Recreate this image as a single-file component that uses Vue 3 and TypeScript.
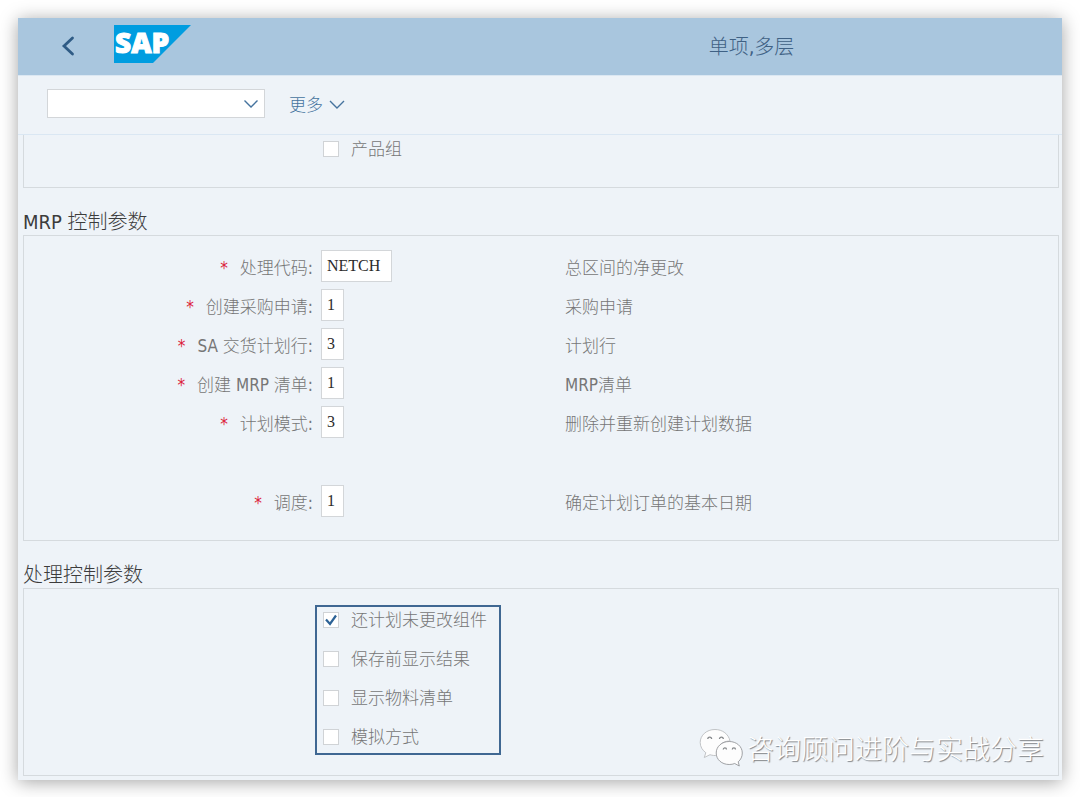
<script setup lang="ts">
import { ref } from 'vue'

interface Param {
  id: string
  label: string
  value: string
  text: string
  wide?: boolean
  spaced?: boolean
}

interface Option {
  id: string
  label: string
  checked: boolean
}

const command = ref('')
const productGroup = ref(false)

const params = ref<Param[]>([
  { id: 'proc', label: '处理代码:', value: 'NETCH', text: '总区间的净更改', wide: true },
  { id: 'preq', label: '创建采购申请:', value: '1', text: '采购申请' },
  { id: 'sched', label: 'SA 交货计划行:', value: '3', text: '计划行' },
  { id: 'list', label: '创建 MRP 清单:', value: '1', text: 'MRP清单' },
  { id: 'mode', label: '计划模式:', value: '3', text: '删除并重新创建计划数据' },
  { id: 'dates', label: '调度:', value: '1', text: '确定计划订单的基本日期', spaced: true },
])

const options = ref<Option[]>([
  { id: 'unchanged', label: '还计划未更改组件', checked: true },
  { id: 'results', label: '保存前显示结果', checked: false },
  { id: 'bom', label: '显示物料清单', checked: false },
  { id: 'simulate', label: '模拟方式', checked: false },
])
</script>

<template>
  <div class="window">
    <header class="shell">
      <button class="back" type="button" aria-label="返回">
        <svg width="14" height="20" viewBox="0 0 14 20">
          <path d="M11.500 2 L3 10 L11.500 18" fill="none" stroke="#2f5b85" stroke-width="2.8" stroke-linecap="round" />
        </svg>
      </button>
      <svg class="logo" width="77" height="38" viewBox="0 0 77 38">
        <polygon points="0,0 77,0 39,38 0,38" fill="#009de0" />
        <text x="1" y="28" class="logo-text">SAP</text>
      </svg>
      <h1 class="title">单项,多层</h1>
    </header>

    <nav class="toolbar">
      <div class="combo">
        <select v-model="command" aria-label="命令">
          <option value=""></option>
        </select>
        <svg class="combo-arrow" width="16" height="10" viewBox="0 0 16 10">
          <path d="M1.500 1.500 L8 8 L14.500 1.500" fill="none" stroke="#45739e" stroke-width="1.4" />
        </svg>
      </div>
      <button class="more" type="button">
        更多
        <svg width="16" height="10" viewBox="0 0 16 10">
          <path d="M1 1 L8 8 L15 1" fill="none" stroke="#45739e" stroke-width="1.4" />
        </svg>
      </button>
    </nav>

    <main class="content">
      <section class="group group-scope">
        <div class="option">
          <span class="tick">
            <input id="product-group" v-model="productGroup" type="checkbox" />
            <svg v-if="productGroup" width="16" height="16" viewBox="0 0 16 16">
              <path d="M3 7.500 L7 12 L13 3.500" fill="none" stroke="#2c6296" stroke-width="2.2" />
            </svg>
          </span>
          <label for="product-group">产品组</label>
        </div>
      </section>

      <h2 class="heading">MRP 控制参数</h2>
      <section class="group group-params">
        <div v-for="p in params" :key="p.id" class="row" :class="{ spaced: p.spaced }">
          <label :for="p.id"><span class="star">*</span>{{ p.label }}</label>
          <div class="field">
            <input :id="p.id" v-model="p.value" type="text" :class="{ wide: p.wide }" />
          </div>
          <span class="text">{{ p.text }}</span>
        </div>
      </section>

      <h2 class="heading">处理控制参数</h2>
      <section class="group group-options">
        <div class="marked">
          <div v-for="o in options" :key="o.id" class="option">
            <span class="tick">
              <input :id="o.id" v-model="o.checked" type="checkbox" />
              <svg v-if="o.checked" width="16" height="16" viewBox="0 0 16 16">
                <path d="M3 7.500 L7 12 L13 3.500" fill="none" stroke="#2c6296" stroke-width="2.2" />
              </svg>
            </span>
            <label :for="o.id">{{ o.label }}</label>
          </div>
        </div>
      </section>
    </main>

    <div class="watermark">
      <svg width="44" height="40" viewBox="0 0 44 40">
        <g fill="#fdfdfd" stroke="#b4b6b9" stroke-width="0.8">
          <path d="M16 1.500C7.500 1.500 1.200 7.300 1.200 14.500C1.200 18.800 3.500 22.300 6.800 24.700L5.300 29.500L11 26.700C13.500 27.500 15.500 27.700 18.500 27.400C16.500 19 23 12.800 31 13C29.500 6 23.500 1.500 16 1.500Z" />
          <path stroke="#8a8c8f" d="M30.200 13.500C22.800 13.500 17.200 18.500 17.200 25C17.200 31.600 22.800 36.500 30.200 36.500C32.300 36.500 34 36.200 35.700 35.500L40.300 38L39.200 33.800C41.800 31.700 43.300 28.500 43.300 25C43.300 18.500 37.500 13.500 30.200 13.500Z" />
        </g>
        <g fill="none" stroke="#85888b" stroke-width="1.300">
          <path d="M8.800 11a1.900 1.900 0 0 1 3.800 0" />
          <path d="M20.500 11a1.900 1.900 0 0 1 3.800 0" />
          <path d="M24.300 21.500a1.600 1.600 0 0 1 3.200 0" />
          <path d="M33.300 21.500a1.600 1.600 0 0 1 3.200 0" />
        </g>
      </svg>
      <span>咨询顾问进阶与实战分享</span>
    </div>
  </div>
</template>

<style>
body {
  margin: 0;
  background: #fff;
}
</style>

<style scoped>
* {
  box-sizing: border-box;
}

.window {
  position: relative;
  margin: 18px;
  background: #eef3f8;
  box-shadow: 0 2px 17px rgba(0, 0, 0, 0.36);
  font-family: 'DejaVu Sans Condensed', 'DejaVu Sans', 'Noto Sans CJK SC', sans-serif;
  font-weight: 300;
  font-size: 17px;
  line-height: 24px;
  color: #767676;
}

.shell {
  display: flex;
  align-items: center;
  height: 57px;
  padding: 0 0 2px 39px;
  background: #a9c6de;
}

.back {
  display: flex;
  align-items: center;
  justify-content: center;
  width: 22px;
  height: 28px;
  padding: 0;
  border: 0;
  background: none;
}

.logo {
  flex: none;
  margin-left: 35px;
  margin-bottom: 4px;
  overflow: visible;
}

.logo-text {
  font-family: 'Open Sans', 'Liberation Sans', sans-serif;
  font-size: 28px;
  font-weight: 800;
  fill: #fff;
  stroke: #fff;
  stroke-width: 1px;
}

.title {
  flex: 1;
  margin: 0 0 0 250px;
  padding-top: 2px;
  font-size: 20px;
  font-weight: 300;
  line-height: 28px;
  text-align: center;
  color: #3f6184;
}

.toolbar {
  display: flex;
  align-items: center;
  gap: 24px;
  height: 60px;
  padding: 0 29px 4px;
  border-top: 1px solid #dbe7f2;
  border-bottom: 1px solid #dae7f3;
}

.combo {
  position: relative;
  width: 218px;
}

.combo select {
  display: block;
  width: 100%;
  height: 29px;
  border: 1px solid #d3d6d9;
  border-radius: 0;
  appearance: none;
  background: #fff;
}

.combo-arrow {
  position: absolute;
  top: 10px;
  right: 6px;
  pointer-events: none;
}

.more {
  display: flex;
  align-items: center;
  gap: 6px;
  padding: 3px 0 0;
  border: 0;
  background: none;
  font: inherit;
  color: #45739e;
}

.content {
  padding: 0 3px 4px 5px;
}

.group {
  border: 1px solid #d5dade;
}

.heading {
  margin: 22px 0 0;
  font-size: 20px;
  font-weight: 300;
  line-height: 25px;
  color: #3c3c3c;
}

.group-scope {
  height: 53px;
  padding: 2px 0 0 299px;
  border-top: 0;
}

.group-params {
  display: flex;
  flex-direction: column;
  gap: 7px;
  padding: 14px 0 23px;
}

.row {
  display: grid;
  grid-template-columns: 289px 236px 1fr;
  column-gap: 8px;
  align-items: center;
}

.row.spaced {
  margin-top: 40px;
}

.row label,
.row .text {
  padding-top: 3px;
}

.row label {
  text-align: right;
}

.star {
  margin-right: 12px;
  font-weight: 400;
  color: #dc1e3c;
}

.field input {
  display: block;
  width: 23px;
  height: 32px;
  padding: 0 5px;
  border: 1px solid #d3d6d9;
  border-radius: 0;
  background: #fff;
  font-family: 'Liberation Serif', serif;
  font-size: 16px;
  color: #2b2b2b;
}

.field input.wide {
  width: 71px;
}

.group-options {
  padding: 16px 0 20px 291px;
}

.marked {
  display: flex;
  flex-direction: column;
  gap: 15px;
  width: 186px;
  padding: 1px 0 4px 6px;
  border: 2px solid #3f6792;
}

.option {
  display: flex;
  align-items: center;
  gap: 12px;
}

.tick {
  position: relative;
  width: 16px;
  height: 16px;
}

.tick input {
  display: block;
  width: 16px;
  height: 16px;
  margin: 0;
  border: 1px solid #d0d3d6;
  appearance: none;
  background: #fff;
}

.tick svg {
  position: absolute;
  top: 0;
  left: 0;
  pointer-events: none;
}

.watermark {
  position: absolute;
  right: 18px;
  bottom: 12px;
  display: flex;
  align-items: center;
  gap: 4px;
  font-family: 'Noto Sans CJK SC', sans-serif;
  font-size: 27px;
  line-height: 40px;
  color: #fff;
  text-shadow: 1px 1px 1px #808386;
}
</style>
